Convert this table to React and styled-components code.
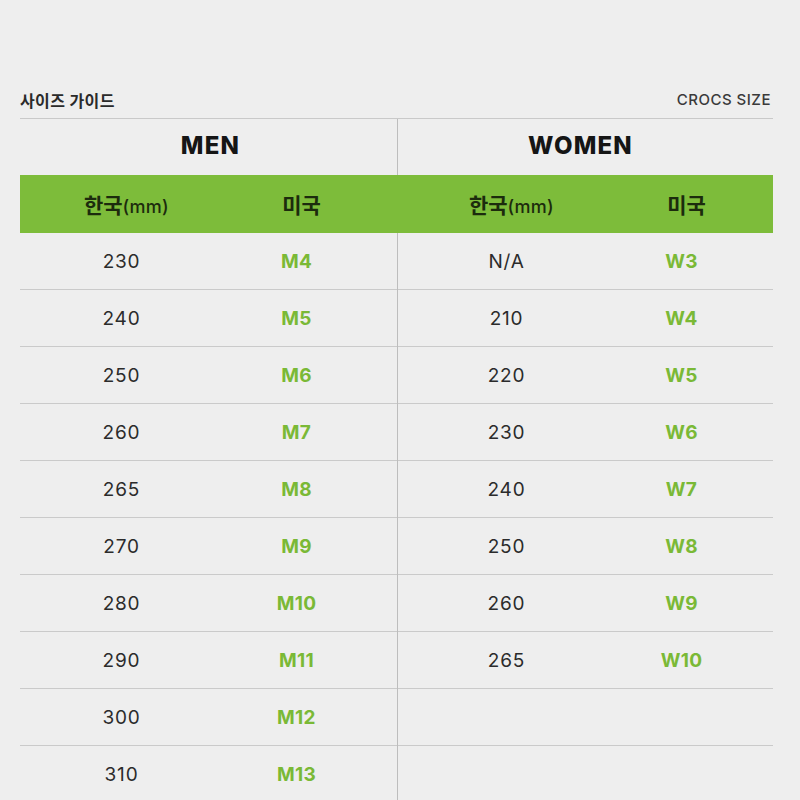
import styled, { createGlobalStyle } from "styled-components"

const GlobalStyle = createGlobalStyle`
  body {
    margin: 0;
    background: #eeeeee;
    font-family: Inter, "Noto Sans CJK KR", sans-serif;
    color: #2b2b2b;
  }
`

const Page = styled.div`
  padding: 90px 27px 0 20px;
  height: 800px;
  box-sizing: border-box;
  overflow: hidden;
`
const TitleBar = styled.div`
  display: flex;
  justify-content: space-between;
  align-items: center;
  line-height: 20px;
  padding: 0 2px 8px 0;
  border-bottom: 1px solid #c9c9c9;
`
const PageTitle = styled.h1`
  margin: 0;
  font-size: 16px;
  font-weight: 700;
  letter-spacing: 0.4px;
  color: #2a2a2a;
  font-family: "Noto Sans CJK KR", sans-serif;
`
const BrandLabel = styled.span`
  font-size: 15px;
  font-weight: 500;
  color: #3a3a3a;
  letter-spacing: 0.5px;
`
const Table = styled.div`
  display: grid;
  grid-template-columns: 377px 376px;
`
const Half = styled.section`
  border-left: ${({ $divided }) => ($divided ? "1px solid #bdbdbd" : "none")};
`
const HalfTitle = styled.h2`
  margin: 0;
  height: 56px;
  padding: 0 ${({ $shift }) => ($shift < 0 ? -$shift * 2 : 0)}px 4px ${({ $shift }) => ($shift > 0 ? $shift * 2 : 0)}px;
  box-sizing: border-box;
  display: flex;
  align-items: center;
  justify-content: center;
  font-size: 24px;
  font-weight: 800;
  letter-spacing: 1.2px;
  color: #151515;
`
const Row = styled.div`
  display: grid;
  grid-template-columns: 175px 175px;
  padding-left: ${({ $inset }) => $inset}px;
  height: 57px;
  box-sizing: border-box;
  align-items: center;
  border-bottom: 1px solid #cacaca;
`
const HeadRow = styled(Row)`
  height: 58px;
  background: #7dbc3a;
  border-bottom: none;
  margin-left: ${({ $divided }) => ($divided ? "-1px" : "0")};
  padding-left: ${({ $inset, $divided }) => $inset + ($divided ? 1 : 0) + 5}px;
`
const HeadCell = styled.div`
  text-align: center;
  font-family: "Noto Sans CJK KR", sans-serif;
  font-size: 21px;
  font-weight: 700;
  color: #1c2b0d;
  small {
    font-family: Inter, sans-serif;
    font-size: 18px;
    font-weight: 500;
    letter-spacing: 0.3px;
  }
`
const SizeCell = styled.div`
  text-align: center;
  font-size: 19px;
  letter-spacing: 0.8px;
  color: #2b2b2b;
`
const UsCell = styled.div`
  text-align: center;
  font-size: 19px;
  font-weight: 700;
  letter-spacing: 0.3px;
  color: #7ab936;
`

const men = [
  ["230", "M4"], ["240", "M5"], ["250", "M6"], ["260", "M7"], ["265", "M8"],
  ["270", "M9"], ["280", "M10"], ["290", "M11"], ["300", "M12"], ["310", "M13"],
]
const women = [
  ["N/A", "W3"], ["210", "W4"], ["220", "W5"], ["230", "W6"], ["240", "W7"],
  ["250", "W8"], ["260", "W9"], ["265", "W10"], ["", ""], ["", ""],
]

function SizeHalf({ title, rows, inset, divided, shift }) {
  return (
    <Half $divided={divided}>
      <HalfTitle $shift={shift}>{title}</HalfTitle>
      <HeadRow $inset={inset} $divided={divided}>
        <HeadCell>한국<small>(mm)</small></HeadCell>
        <HeadCell>미국</HeadCell>
      </HeadRow>
      {rows.map(([kr, us], i) => (
        <Row key={i} $inset={inset}>
          <SizeCell>{kr}</SizeCell>
          <UsCell>{us}</UsCell>
        </Row>
      ))}
    </Half>
  )
}

export default function App() {
  return (
    <>
      <GlobalStyle />
      <Page>
        <TitleBar>
          <PageTitle>사이즈 가이드</PageTitle>
          <BrandLabel>CROCS SIZE</BrandLabel>
        </TitleBar>
        <Table>
          <SizeHalf title="MEN" rows={men} inset={14} shift={2} />
          <SizeHalf title="WOMEN" rows={women} inset={21} divided shift={-5} />
        </Table>
      </Page>
    </>
  )
}
